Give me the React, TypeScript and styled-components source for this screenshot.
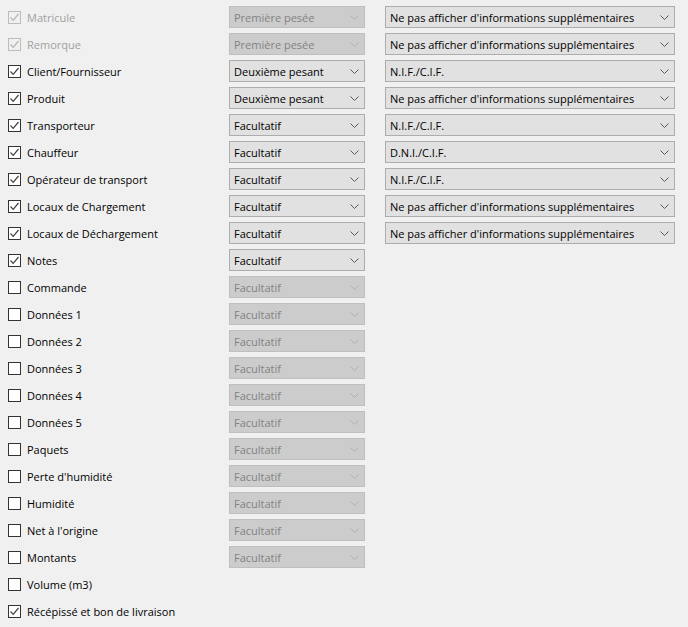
import React from "react";
import styled, { createGlobalStyle } from "styled-components";

interface Field {
  label: string;
  checked: boolean;
  locked?: boolean;
  mode?: string;
  modeDisabled?: boolean;
  info?: string;
}

const NO_INFO = "Ne pas afficher d'informations supplémentaires";

const fields: Field[] = [
  { label: "Matricule", checked: true, locked: true, mode: "Première pesée", modeDisabled: true, info: NO_INFO },
  { label: "Remorque", checked: true, locked: true, mode: "Première pesée", modeDisabled: true, info: NO_INFO },
  { label: "Client/Fournisseur", checked: true, mode: "Deuxième pesant", info: "N.I.F./C.I.F." },
  { label: "Produit", checked: true, mode: "Deuxième pesant", info: NO_INFO },
  { label: "Transporteur", checked: true, mode: "Facultatif", info: "N.I.F./C.I.F." },
  { label: "Chauffeur", checked: true, mode: "Facultatif", info: "D.N.I./C.I.F." },
  { label: "Opérateur de transport", checked: true, mode: "Facultatif", info: "N.I.F./C.I.F." },
  { label: "Locaux de Chargement", checked: true, mode: "Facultatif", info: NO_INFO },
  { label: "Locaux de Déchargement", checked: true, mode: "Facultatif", info: NO_INFO },
  { label: "Notes", checked: true, mode: "Facultatif" },
  { label: "Commande", checked: false, mode: "Facultatif", modeDisabled: true },
  { label: "Données 1", checked: false, mode: "Facultatif", modeDisabled: true },
  { label: "Données 2", checked: false, mode: "Facultatif", modeDisabled: true },
  { label: "Données 3", checked: false, mode: "Facultatif", modeDisabled: true },
  { label: "Données 4", checked: false, mode: "Facultatif", modeDisabled: true },
  { label: "Données 5", checked: false, mode: "Facultatif", modeDisabled: true },
  { label: "Paquets", checked: false, mode: "Facultatif", modeDisabled: true },
  { label: "Perte d'humidité", checked: false, mode: "Facultatif", modeDisabled: true },
  { label: "Humidité", checked: false, mode: "Facultatif", modeDisabled: true },
  { label: "Net à l'origine", checked: false, mode: "Facultatif", modeDisabled: true },
  { label: "Montants", checked: false, mode: "Facultatif", modeDisabled: true },
  { label: "Volume (m3)", checked: false },
  { label: "Récépissé et bon de livraison", checked: true },
];

const Chevron = ({ disabled }: { disabled?: boolean }) => (
  <svg width="9" height="5" viewBox="0 0 9 5">
    <path
      d="M0.5 0.5 L4.5 4.5 L8.5 0.5"
      fill="none"
      stroke={disabled ? "#b0b0b0" : "#5a5a5a"}
      strokeWidth="1"
    />
  </svg>
);

const Check = ({ disabled }: { disabled?: boolean }) => (
  <svg width="11" height="11" viewBox="0 0 11 11">
    <path
      d="M1.5 5.5 L4.2 8.3 L9.5 2"
      fill="none"
      stroke={disabled ? "#b4b4b4" : "#404040"}
      strokeWidth="1.2"
    />
  </svg>
);

export default function App() {
  return (
    <>
      <GlobalStyle />
      <Panel>
        {fields.map((f) => (
          <Row key={f.label}>
            <CheckLabel>
              <Box $disabled={f.locked}>{f.checked && <Check disabled={f.locked} />}</Box>
              <LabelText $disabled={f.locked}>{f.label}</LabelText>
            </CheckLabel>
            {f.mode ? (
              <Combo $disabled={f.modeDisabled} role="combobox">
                <span>{f.mode}</span>
                <Chevron disabled={f.modeDisabled} />
              </Combo>
            ) : (
              <span />
            )}
            {f.info ? (
              <Combo role="combobox">
                <span>{f.info}</span>
                <Chevron />
              </Combo>
            ) : (
              <span />
            )}
          </Row>
        ))}
      </Panel>
    </>
  );
}

const GlobalStyle = createGlobalStyle`
  html, body {
    margin: 0;
    background: #f0f0f0;
  }
  body {
    font-family: "Open Sans", "Noto Sans", sans-serif;
    font-size: 11px;
    color: #000;
  }
`;

const Panel = styled.div`
  width: 688px;
  height: 627px;
  box-sizing: border-box;
  padding: 6px 0 0 8px;
  display: flex;
  flex-direction: column;
  gap: 5px;
`;

const Row = styled.div`
  display: grid;
  grid-template-columns: 201px 136px 290px;
  column-gap: 20px;
  height: 22px;
  align-items: center;
`;

const CheckLabel = styled.label`
  display: flex;
  align-items: center;
  gap: 6px;
`;

const Box = styled.span<{ $disabled?: boolean }>`
  width: 13px;
  height: 13px;
  flex: none;
  box-sizing: border-box;
  border: 1px solid ${(p) => (p.$disabled ? "#bcbcbc" : "#333333")};
  background: ${(p) => (p.$disabled ? "#f0f0f0" : "#ffffff")};
  display: flex;
  align-items: center;
  justify-content: center;
`;

const LabelText = styled.span<{ $disabled?: boolean }>`
  color: ${(p) => (p.$disabled ? "#a0a0a0" : "#000")};
  white-space: nowrap;
`;

const Combo = styled.div<{ $disabled?: boolean }>`
  height: 22px;
  box-sizing: border-box;
  display: flex;
  align-items: center;
  justify-content: space-between;
  padding: 0 5px 0 4px;
  background: ${(p) => (p.$disabled ? "#cccccc" : "#e1e1e1")};
  border: 1px solid ${(p) => (p.$disabled ? "#bfbfbf" : "#adadad")};
  color: ${(p) => (p.$disabled ? "#838383" : "#000")};
  white-space: nowrap;
  overflow: hidden;
`;
